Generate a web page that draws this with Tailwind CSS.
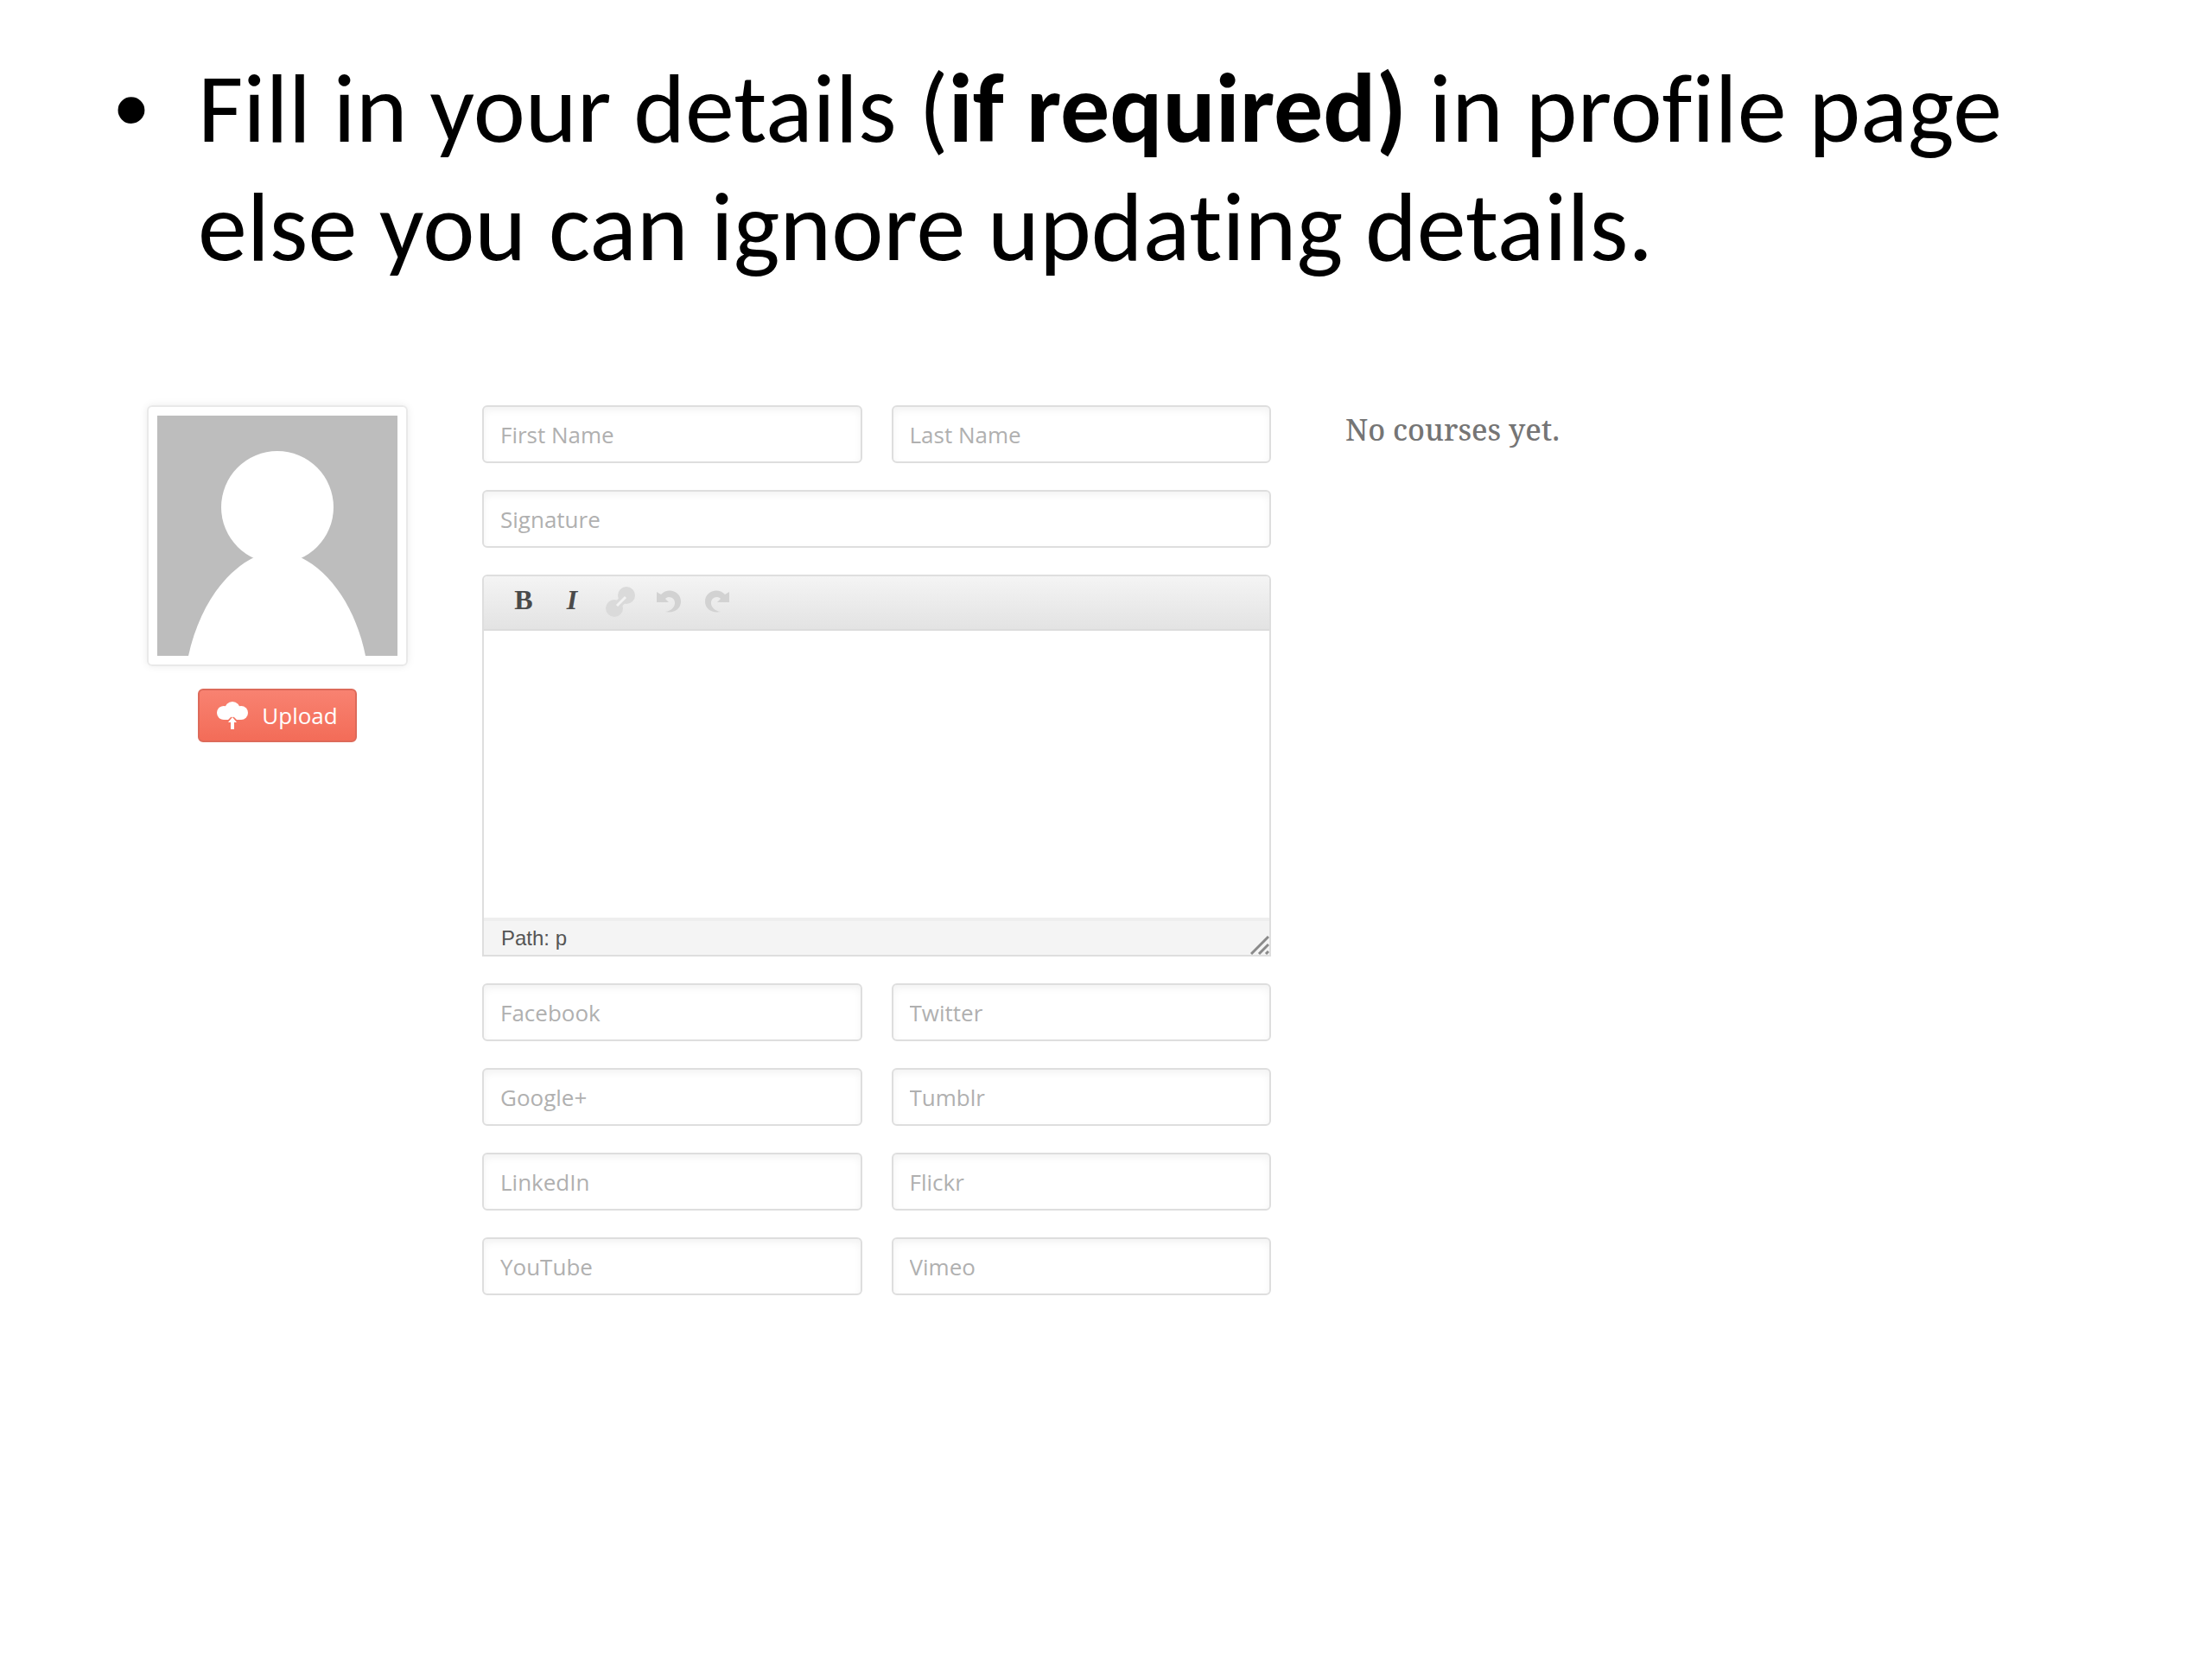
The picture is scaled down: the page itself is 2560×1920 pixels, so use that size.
<!DOCTYPE html>
<html lang="en">
<head>
    <meta charset="UTF-8">
    <meta name="viewport" content="width=device-width, initial-scale=1.0">
    <title>Profile Page</title>
    <script src="https://cdn.jsdelivr.net/npm/@tailwindcss/browser@4"></script>
</head>
<body class="bg-white font-['Open_Sans',sans-serif]">
    <!-- Instruction -->
    <header class="pt-[57px] pl-[132px] pr-20">
        <ul class="font-['Carlito','Lato',sans-serif] text-[114px] leading-[137px] text-black [font-variant-ligatures:none]">
            <li class="flex gap-[57px]">
                <span class="font-['Liberation_Sans',sans-serif]" aria-hidden="true">•</span>
                <p>Fill in your details (<strong>if required)</strong> in profile page else you can ignore updating details.</p>
            </li>
        </ul>
    </header>

    <!-- Profile -->
    <main class="grid grid-cols-[302px_minmax(0,913fr)_minmax(0,905fr)] gap-x-[86px] pt-[138px] pl-[170px] pr-[98px] pb-20">
        <!-- Avatar -->
        <section class="flex flex-col items-center gap-[26px]">
            <div class="w-full rounded-md border-2 border-[#e9e9e9] p-[10px] shadow-[0_0_10px_rgba(0,0,0,0.08)]">
                <svg class="block w-full" viewBox="0 0 278 278" role="img" aria-label="Avatar">
                    <rect width="278" height="278" fill="#bdbdbd"/>
                    <circle cx="139" cy="106" r="65" fill="#fff"/>
                    <path d="M36 278C48 224 76 182 112 164H166C202 182 230 224 241 278Z" fill="#fff"/>
                </svg>
            </div>
            <button type="button" class="flex h-[62px] items-center gap-4 rounded-md border-2 border-[#dd6a5a] bg-linear-to-b from-[#f88271] to-[#f36c58] px-5 text-[26px] text-white">
                <svg class="w-9" viewBox="0 0 36 32" fill="#fff" aria-hidden="true">
                    <circle cx="8" cy="13" r="8"/>
                    <circle cx="18" cy="9" r="9"/>
                    <circle cx="28" cy="13" r="8"/>
                    <path d="M8 21L18 8L28 21H23L18 16L13 21Z"/>
                    <path d="M18 18L23 24H20V32H16V24H13Z"/>
                </svg>
                Upload
            </button>
        </section>

        <!-- Details form -->
        <form class="grid grid-cols-2 gap-x-[34px] gap-y-[31px]">
            <input type="text" aria-label="First Name" placeholder="First Name" class="h-[67px] w-full rounded-md border-2 border-[#dedede] px-[19px] text-[26px] shadow-[inset_0_4px_8px_rgba(0,0,0,0.05)] placeholder:text-[#b0b0b0]">
            <input type="text" aria-label="Last Name" placeholder="Last Name" class="h-[67px] w-full rounded-md border-2 border-[#dedede] px-[19px] text-[26px] shadow-[inset_0_4px_8px_rgba(0,0,0,0.05)] placeholder:text-[#b0b0b0]">
            <input type="text" aria-label="Signature" placeholder="Signature" class="col-span-2 h-[67px] w-full rounded-md border-2 border-[#dedede] px-[19px] text-[26px] shadow-[inset_0_4px_8px_rgba(0,0,0,0.05)] placeholder:text-[#b0b0b0]">

            <!-- Editor -->
            <div class="col-span-2 flex flex-col overflow-hidden rounded-t-md border-2 border-[#dedede]">
                <div class="flex h-[63px] items-center gap-4 border-b-2 border-[#dcdcdc] bg-linear-to-b from-[#f4f4f4] to-[#e3e3e3] px-[26px] pb-1 font-['Liberation_Serif',serif] text-[32px] leading-9 font-bold text-[#4a4a4a]">
                    <button type="button" aria-label="Bold" class="h-10 w-10 pb-1">B</button>
                    <button type="button" aria-label="Italic" class="h-10 w-10 pb-1 italic">I</button>
                    <button type="button" aria-label="Link" class="flex h-10 w-10 items-center justify-center">
                        <svg class="w-9" viewBox="0 0 36 36" aria-hidden="true">
                            <circle cx="25" cy="11" r="10" fill="#dadada"/>
                            <circle cx="11" cy="26" r="10" fill="#dadada"/>
                            <path d="M14 23L24 13" stroke="#dadada" stroke-width="9"/>
                            <path d="M14 23L24 13" stroke="#f2f2f2" stroke-width="3"/>
                        </svg>
                    </button>
                    <button type="button" aria-label="Undo" class="flex h-10 w-10 items-center justify-center">
                        <svg class="w-7" viewBox="0 0 28 28" fill="#d2d2d2" aria-hidden="true">
                            <path d="M0 3L5 6C13-3 28 2 28 14C28 23 20 28 10 26C24 24 24 9 14 9C12 9 11 10 10 11L14 15H0Z"/>
                        </svg>
                    </button>
                    <button type="button" aria-label="Redo" class="flex h-10 w-10 items-center justify-center">
                        <svg class="w-7" viewBox="0 0 28 28" fill="#d2d2d2" aria-hidden="true">
                            <path d="M28 3L23 6C15-3 0 2 0 14C0 23 8 28 18 26C4 24 4 9 14 9C16 9 17 10 18 11L14 15H28Z"/>
                        </svg>
                    </button>
                </div>
                <textarea aria-label="About" class="block h-[332px] w-full resize-none p-5 text-[26px]"></textarea>
                <div class="flex h-[43px] items-center justify-between border-t-4 border-[#eeeeee] bg-[#f4f4f4] pl-5 font-['Liberation_Sans',sans-serif] text-2xl text-[#555]">
                    <span>Path: p</span>
                    <svg class="w-[22px] self-end" viewBox="0 0 22 22" stroke="#8a8a8a" stroke-width="3" aria-hidden="true">
                        <path d="M1 21L21 1M10 21L21 10M18 21L21 18"/>
                    </svg>
                </div>
            </div>

            <!-- Social links -->
            <input type="text" aria-label="Facebook" placeholder="Facebook" class="h-[67px] w-full rounded-md border-2 border-[#dedede] px-[19px] text-[26px] shadow-[inset_0_4px_8px_rgba(0,0,0,0.05)] placeholder:text-[#b0b0b0]">
            <input type="text" aria-label="Twitter" placeholder="Twitter" class="h-[67px] w-full rounded-md border-2 border-[#dedede] px-[19px] text-[26px] shadow-[inset_0_4px_8px_rgba(0,0,0,0.05)] placeholder:text-[#b0b0b0]">
            <input type="text" aria-label="Google+" placeholder="Google+" class="h-[67px] w-full rounded-md border-2 border-[#dedede] px-[19px] text-[26px] shadow-[inset_0_4px_8px_rgba(0,0,0,0.05)] placeholder:text-[#b0b0b0]">
            <input type="text" aria-label="Tumblr" placeholder="Tumblr" class="h-[67px] w-full rounded-md border-2 border-[#dedede] px-[19px] text-[26px] shadow-[inset_0_4px_8px_rgba(0,0,0,0.05)] placeholder:text-[#b0b0b0]">
            <input type="text" aria-label="LinkedIn" placeholder="LinkedIn" class="h-[67px] w-full rounded-md border-2 border-[#dedede] px-[19px] text-[26px] shadow-[inset_0_4px_8px_rgba(0,0,0,0.05)] placeholder:text-[#b0b0b0]">
            <input type="text" aria-label="Flickr" placeholder="Flickr" class="h-[67px] w-full rounded-md border-2 border-[#dedede] px-[19px] text-[26px] shadow-[inset_0_4px_8px_rgba(0,0,0,0.05)] placeholder:text-[#b0b0b0]">
            <input type="text" aria-label="YouTube" placeholder="YouTube" class="h-[67px] w-full rounded-md border-2 border-[#dedede] px-[19px] text-[26px] shadow-[inset_0_4px_8px_rgba(0,0,0,0.05)] placeholder:text-[#b0b0b0]">
            <input type="text" aria-label="Vimeo" placeholder="Vimeo" class="h-[67px] w-full rounded-md border-2 border-[#dedede] px-[19px] text-[26px] shadow-[inset_0_4px_8px_rgba(0,0,0,0.05)] placeholder:text-[#b0b0b0]">
        </form>

        <!-- Courses -->
        <aside>
            <h2 class="font-['Noto_Serif','Liberation_Serif',serif] text-[34px] leading-[56px] font-medium text-[#757575]">No courses yet.</h2>
        </aside>
    </main>
</body>
</html>
